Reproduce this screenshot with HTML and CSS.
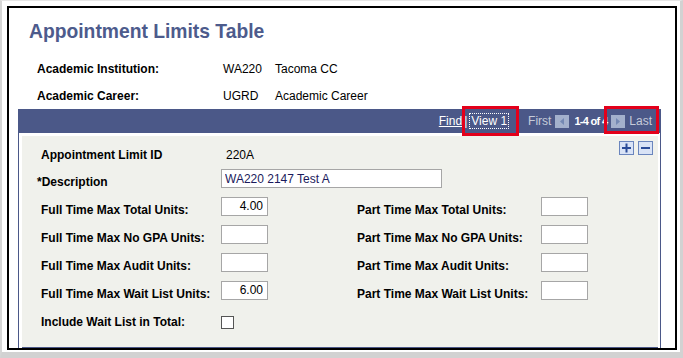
FILE: index.html
```html
<!DOCTYPE html>
<html lang="en">
<head>
  <meta charset="UTF-8" />
  <title>Appointment Limits Table</title>
  <link rel="stylesheet" href="styles.css">
</head>
<body>

  <div class="screen">
    <div class="frame">
      <h1 class="page-title">Appointment Limits Table</h1>

      <div class="key-row">
        <span class="key-label">Academic Institution:</span>
        <span class="key-code">WA220</span>
        <span>Tacoma CC</span>
      </div>
      <div class="key-row key-row-last">
        <span class="key-label">Academic Career:</span>
        <span class="key-code">UGRD</span>
        <span>Academic Career</span>
      </div>

      <div class="scroll-area">
        <div class="scroll-bar">
          <a href="#" class="nav-link">Find</a>
          <span class="sep">|</span>
          <a href="#" class="nav-link view-link">View 1</a>
          <span class="nav-dim first-link">First</span>
          <svg class="arrow-btn" width="14" height="13" viewBox="0 0 14 13">
            <rect x="0" y="0" width="14" height="13" fill="#a3b0cc" />
            <polygon points="9,3 9,10 5,6.5" fill="#7488b3" />
          </svg>
          <span class="count">1-4 of 4</span>
          <svg class="arrow-btn" width="14" height="13" viewBox="0 0 14 13">
            <rect x="0" y="0" width="14" height="13" fill="#a3b0cc" />
            <polygon points="5,3 5,10 9,6.5" fill="#7488b3" />
          </svg>
          <span class="nav-dim">Last</span>

          <!-- highlight boxes drawn over the bar -->
          <span class="callout callout-view"></span>
          <span class="callout callout-last"></span>
        </div>

        <div class="panel">
          <div class="id-row">
            <span class="field-label">Appointment Limit ID</span>
            <span class="id-value">220A</span>
            <div class="row-tools">
              <svg width="15" height="14" viewBox="0 0 15 14">
                <rect x="0.5" y="0.5" width="14" height="13" fill="#d9e3f6" stroke="#6a85bd" />
                <rect x="3" y="6" width="9" height="2" fill="#2b4c98" />
                <rect x="6.5" y="2.5" width="2" height="9" fill="#2b4c98" />
              </svg>
              <svg width="15" height="14" viewBox="0 0 15 14">
                <rect x="0.5" y="0.5" width="14" height="13" fill="#d9e3f6" stroke="#6a85bd" />
                <rect x="3" y="6" width="9" height="2" fill="#2b4c98" />
              </svg>
            </div>
          </div>

          <div class="field-row">
            <span class="field-label desc-label">*Description</span>
            <input type="text" class="desc-input" value="WA220 2147 Test A" />
          </div>

          <div class="field-row">
            <span class="field-label">Full Time Max Total Units:</span>
            <input type="text" class="num-input" value="4.00" />
            <span class="field-label">Part Time Max Total Units:</span>
            <input type="text" class="num-input" value="" />
          </div>

          <div class="field-row">
            <span class="field-label">Full Time Max No GPA Units:</span>
            <input type="text" class="num-input" value="" />
            <span class="field-label">Part Time Max No GPA Units:</span>
            <input type="text" class="num-input" value="" />
          </div>

          <div class="field-row">
            <span class="field-label">Full Time Max Audit Units:</span>
            <input type="text" class="num-input" value="" />
            <span class="field-label">Part Time Max Audit Units:</span>
            <input type="text" class="num-input" value="" />
          </div>

          <div class="field-row">
            <span class="field-label">Full Time Max Wait List Units:</span>
            <input type="text" class="num-input" value="6.00" />
            <span class="field-label">Part Time Max Wait List Units:</span>
            <input type="text" class="num-input" value="" />
          </div>

          <div class="field-row">
            <span class="field-label">Include Wait List in Total:</span>
            <input type="checkbox" class="check" />
          </div>
        </div>
      </div>
    </div>
  </div>

</body>
</html>
```

FILE: styles.css
```css
* {
  margin: 0;
  padding: 0;
  box-sizing: border-box;
  font-family: 'Liberation Sans', Arial, sans-serif;
}

body {
  background: #fff;
  color: #000;
}

/* screenshot edge + black frame */
.screen {
  width: 683px;
  height: 358px;
  border-left: 2px solid #d6d6d6;
  border-top: 1px solid #e6e6e6;
  border-right: 3px solid #d2d2d2;
  border-bottom: 6px solid #d2d2d2;
  padding: 5px 3px 2px 5px;
}

.frame {
  height: 100%;
  border: 2px solid #000;
  overflow: hidden;
  display: flex;
  flex-direction: column;
}

.page-title {
  margin: 12px 0 18px 20px;
  font-size: 19.3px;
  line-height: 24px;
  font-weight: 700;
  color: #4d5b8c;
}

.key-row {
  display: flex;
  font-size: 12px;
  line-height: 14px;
  padding-left: 28px;
  margin-bottom: 13px;
}

.key-row-last {
  margin-bottom: 0;
}

.key-label {
  width: 186px;
  font-weight: 700;
}

.key-code {
  width: 52px;
}

.scroll-area {
  position: relative;
  flex: 1;
  margin: 6px 14px 0 9px;
  border-left: 1px solid #4b5888;
  border-right: 1px solid #4b5888;
  display: flex;
  flex-direction: column;
}

.scroll-bar {
  height: 24px;
  background: #4b5888;
  display: flex;
  align-items: center;
  justify-content: flex-end;
  padding-right: 8px;
  font-size: 12px;
  color: #fff;
}

.nav-link {
  color: #fff;
  text-decoration: underline;
}

.sep {
  margin: 0 3px 0 2px;
}

.view-link {
  text-decoration: none;
  outline: 1px dotted #fff;
  outline-offset: 0;
  padding: 0 1px;
}

.first-link {
  margin-left: 20px;
}

.nav-dim {
  color: #c6cbd9;
}

.arrow-btn {
  margin: 0 4px;
}

.count {
  font-weight: 700;
  font-size: 11px;
  letter-spacing: -0.7px;
  margin-left: 1px;
}

.callout {
  position: absolute;
  top: -3px;
  border: 3px solid #e3001b;
}

.callout-view {
  left: 443px;
  width: 57px;
  height: 30px;
}

.callout-last {
  left: 585px;
  width: 55px;
  height: 28px;
}

.panel {
  flex: 1;
  margin: 3px 2px 0 3px;
  background: #f0f1ec;
  border-bottom: 1px solid #4b5888;
  padding: 5px 5px 0 19px;
}

.id-row {
  display: flex;
  height: 28px;
  font-size: 12px;
  line-height: 14px;
}

.id-row .field-label {
  width: 180px;
  padding-top: 7px;
}

.id-value {
  padding-top: 7px;
  margin-left: 5px;
}

.row-tools {
  margin-left: auto;
  display: flex;
  gap: 4px;
  height: 14px;
}

.field-row {
  display: grid;
  grid-template-columns: 180px 136px 184px 47px;
  height: 28px;
  align-items: start;
}

.field-label {
  font-size: 12px;
  line-height: 14px;
  font-weight: 700;
  padding-top: 6px;
}

.desc-label {
  margin-left: -4px;
}

.field-row input[type="text"] {
  height: 19px;
  border: 1px solid #a6a6a6;
  background: #fff;
  font-size: 12px;
  color: #000;
  outline: none;
}

.desc-input {
  grid-column: 2 / 4;
  width: 221px;
  padding: 0 3px;
  color: #1a1a5c !important;
}

.num-input {
  width: 47px;
  text-align: right;
  padding: 0 4px 2px;
}

.check {
  appearance: none;
  width: 13px;
  height: 13px;
  margin-top: 7px;
  border: 1px solid #555;
  background: #fff;
}
```
